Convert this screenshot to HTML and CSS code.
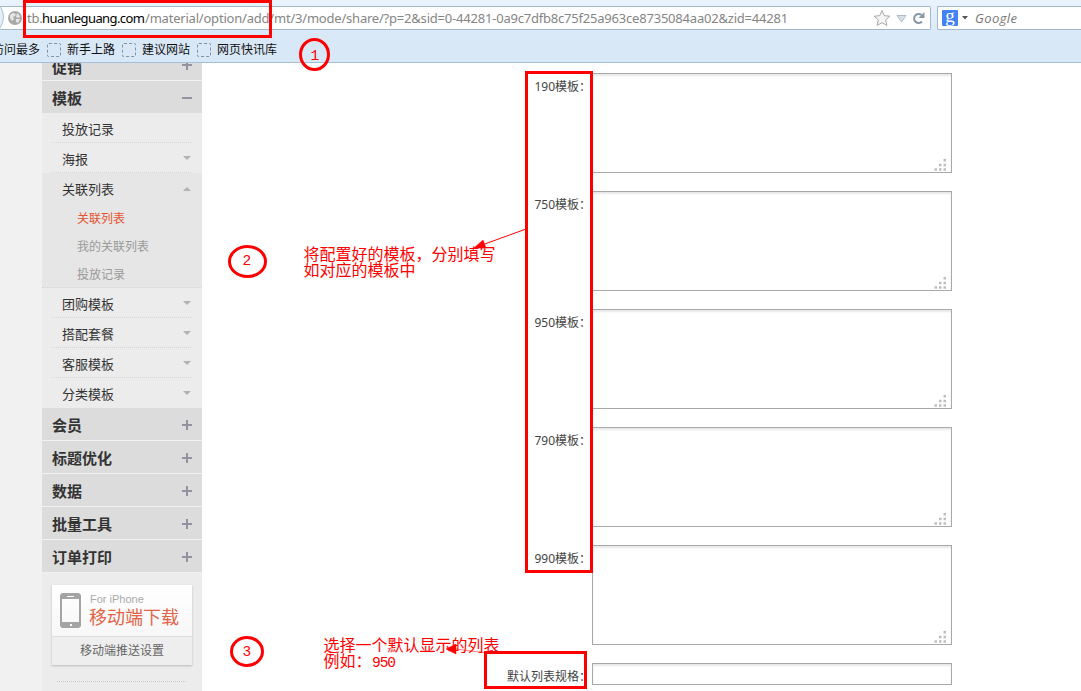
FILE: index.html
```html
<!DOCTYPE html>
<html lang="zh-CN">
<head>
<meta charset="utf-8">
<title>模板</title>
<link rel="stylesheet" href="styles.css">
</head>
<body>
<svg class="defs" width="0" height="0">
  <symbol id="plus" viewBox="0 0 10 10"><path d="M0 5h10M5 0v10" stroke="#9292a0" stroke-width="2"/></symbol>
  <symbol id="minus" viewBox="0 0 10 10"><path d="M0 5h10" stroke="#9292a0" stroke-width="2"/></symbol>
  <symbol id="down" viewBox="0 0 8 4"><path d="M0 0h8L4 4z" fill="#b2b2b2"/></symbol>
  <symbol id="up" viewBox="0 0 8 4"><path d="M0 4h8L4 0z" fill="#b2b2b2"/></symbol>
  <symbol id="grip" viewBox="0 0 12 12"><path d="M9.500 0h2.500v2.500h-2.500zM5 4.700h2.500v2.500h-2.500zM9.500 4.700h2.500v2.500h-2.500zM.5 9.300h2.500v2.500h-2.500zM5 9.300h2.500v2.500h-2.500zM9.500 9.300h2.500v2.500h-2.500z" fill="#bdbdbd"/></symbol>
</svg>
<header class="chrome">
  <div class="nav">
    <div class="address">
      <svg class="back" width="8" height="24" viewBox="0 0 8 24"><path d="M0 0Q7 11 0 22" fill="#e4effa" stroke="#a9c0d4"/></svg>
      <svg class="globe" width="14" height="14" viewBox="0 0 14 14"><circle cx="7" cy="7" r="7" fill="#a9a9a9"/><path d="M2 4l3-2 3 1-1 2-2 1 1 2-2 2-2-3zM9 2l3 3-1 2-3-1zM8 8l4 0-2 4-2-1z" fill="#e6e6e6"/></svg>
      <div class="url"><span class="u1">tb.</span><b class="u2">huanleguang.com</b><span class="u3">/material/option/add/mt/3/mode/share/?p=2&amp;sid=0-44281-0a9c7dfb8c75f25a963ce8735084aa02&amp;zid=44281</span></div>
      <svg class="tools" width="52" height="18" viewBox="0 0 52 18">
        <path d="M9 1.500l2.300 5.200 5.500.5-4.200 3.700 1.300 5.600L9 13.600l-4.900 2.900 1.300-5.600-4.200-3.700 5.500-.5z" fill="#f5f5f5" stroke="#aaa"/>
        <path d="M24 6.500h9L28.500 13z" fill="#d5e0ea" stroke="#b2bcc6"/>
        <path d="M49 12.500A4.500 4.500 0 1 1 48.500 6" fill="none" stroke="#8a98a6" stroke-width="2.200"/><path d="M51.500 3v6h-6z" fill="#8a98a6"/>
      </svg>
    </div>
    <div class="search">
      <span class="g">g</span>
      <svg width="6" height="4" viewBox="0 0 6 4"><path d="M0 0h6L3 3.500z" fill="#555"/></svg>
      <i class="engine">Google</i>
    </div>
  </div>
  <div class="bookmarks">
    <span class="most">访问最多</span>
    <span class="mark"><i class="ph"></i>新手上路</span>
    <span class="mark"><i class="ph"></i>建议网站</span>
    <span class="mark"><i class="ph"></i>网页快讯库</span>
  </div>
</header>
<main class="page">
  <nav class="side">
    <div class="head first"><span>促销</span><svg class="ic"><use href="#plus"/></svg></div>
    <div class="head open"><span>模板</span><svg class="ic"><use href="#minus"/></svg></div>
    <div class="item">投放记录</div>
    <div class="item">海报<svg class="ar"><use href="#down"/></svg></div>
    <div class="group">
      <div class="item">关联列表<svg class="ar"><use href="#up"/></svg></div>
      <div class="sub current">关联列表</div>
      <div class="sub">我的关联列表</div>
      <div class="sub">投放记录</div>
    </div>
    <div class="item">团购模板<svg class="ar"><use href="#down"/></svg></div>
    <div class="item">搭配套餐<svg class="ar"><use href="#down"/></svg></div>
    <div class="item">客服模板<svg class="ar"><use href="#down"/></svg></div>
    <div class="item last">分类模板<svg class="ar"><use href="#down"/></svg></div>
    <div class="head"><span>会员</span><svg class="ic"><use href="#plus"/></svg></div>
    <div class="head"><span>标题优化</span><svg class="ic"><use href="#plus"/></svg></div>
    <div class="head"><span>数据</span><svg class="ic"><use href="#plus"/></svg></div>
    <div class="head"><span>批量工具</span><svg class="ic"><use href="#plus"/></svg></div>
    <div class="head"><span>订单打印</span><svg class="ic"><use href="#plus"/></svg></div>
    <div class="app">
      <div class="dl">
        <svg width="21" height="35" viewBox="0 0 21 35"><path fill-rule="evenodd" d="M2 0h17l2 2v31l-2 2H2l-2-2V2zM2 6v23h17V6zM7 3v1h7V3zM10 31v2h2v-2z" fill="#a4a4a4"/></svg>
        <div class="dltext"><span class="for">For iPhone</span><span class="big">移动端下载</span></div>
      </div>
      <div class="push">移动端推送设置</div>
    </div>
    <div class="rule"></div>
  </nav>
  <section class="form">
    <div class="row"><label>190模板：</label><div class="area"><svg class="grip"><use href="#grip"/></svg></div></div>
    <div class="row"><label>750模板：</label><div class="area"><svg class="grip"><use href="#grip"/></svg></div></div>
    <div class="row"><label>950模板：</label><div class="area"><svg class="grip"><use href="#grip"/></svg></div></div>
    <div class="row"><label>790模板：</label><div class="area"><svg class="grip"><use href="#grip"/></svg></div></div>
    <div class="row"><label>990模板：</label><div class="area"><svg class="grip"><use href="#grip"/></svg></div></div>
    <div class="row"><label>默认列表规格：</label><div class="area input"></div></div>
  </section>
</main>
<svg class="notes" width="1081" height="691" viewBox="0 0 1081 691">
  <g fill="none" stroke="#f00" stroke-width="3">
    <path d="M24.500 1.500h246v35h-246z"/>
    <path d="M526.500 72.500h65v499h-65z"/>
    <path d="M485.500 652.500h100v35h-100z"/>
    <ellipse cx="314.500" cy="54.500" rx="14" ry="15"/>
    <ellipse cx="247.500" cy="261.500" rx="18" ry="15"/>
    <ellipse cx="247" cy="651.500" rx="15.500" ry="14"/>
  </g>
  <path d="M526 229L482 245" stroke="#f00"/>
  <path d="M474 248l9-8 3 8zM446 649l10-5v10zM456 649l30 4" fill="#f00" stroke="#f00" stroke-width=".5"/>
  <g class="num">
    <text x="310.500" y="60">1</text><text x="242.500" y="265">2</text><text x="242.500" y="656">3</text>
    <text x="372" y="667" textLength="24">950</text>
  </g>
  <g class="say">
    <text x="303.500" y="260" textLength="192">将配置好的模板，分别填写</text>
    <text x="303.500" y="276" textLength="112">如对应的模板中</text>
    <text x="323.500" y="651" textLength="176">选择一个默认显示的列表</text>
    <text x="323.500" y="667">例如：</text>
  </g>
</svg>
</body>
</html>
```
FILE: styles.css
```css
* { box-sizing: border-box; }
body { margin: 0; width: 1081px; height: 691px; overflow: hidden; display: flex; flex-direction: column; background: #fff; font-family: "Liberation Sans", "Noto Sans CJK SC", sans-serif; font-size: 12px; color: #333; position: relative; }
.defs { position: absolute; }
.chrome { height: 63px; flex: none; background: linear-gradient(#eaf3fd, #d9e8f7 55%); border-bottom: 1px solid #a5bdd6; overflow: hidden; }
.nav { display: flex; gap: 6px; padding-top: 6px; height: 36px; }
.address { width: 931px; height: 24px; display: flex; align-items: center; background: #fff; border: 1px solid #a3b8c9; border-left: 0; border-radius: 0 2px 2px 0; }
.back { flex: none; }
.globe { flex: none; }
.url { margin-left: 5px; width: 840px; flex: none; white-space: nowrap; font: 13px/22px "Noto Sans", sans-serif; color: #858585; display: flex; }
.u1 { width: 15px; letter-spacing: -.2px; }
.u2 { width: 103px; color: #000; font-weight: 400; letter-spacing: -.59px; }
.u3 { letter-spacing: -.206px; }
.tools { margin-left: 6px; flex: none; }
.search { flex: 1; height: 24px; display: flex; align-items: center; padding-left: 4px; background: #fff; border: 1px solid #a3b8c9; border-right: 0; border-radius: 2px 0 0 2px; }
.g { width: 16px; height: 16px; background: #4580f5; color: #fff; border-radius: 1px; font: 19px/11px "Liberation Serif", serif; text-align: center; margin-right: 4px; }
.engine { margin-left: 7px; font: italic 13px/22px "Open Sans", sans-serif; color: #777; letter-spacing: .4px; }
.bookmarks { display: flex; height: 26px; align-items: center; color: #111; line-height: 20px; padding-top: 1px; }
.most { margin-left: -8px; width: 48px; white-space: nowrap; }
.mark { display: flex; align-items: center; margin-left: 7px; white-space: nowrap; width: 68px; }
.ph { width: 14px; height: 14px; border: 1px dashed #85909b; border-radius: 2px; margin-right: 6px; flex: none; }
.page { flex: 1; display: flex; overflow: hidden; }
.side { flex: none; width: 202px; height: 628px; border-left: 42px solid #f1f1f1; background: #ececec; overflow: hidden; }
.head { height: 33px; background: #dcdcdc; border-bottom: 1px solid #f1f1f1; padding: 0 10px; display: flex; justify-content: space-between; align-items: center; font-size: 15px; font-weight: 700; line-height: 20px; }
.head span { padding-top: 4px; }
.first { height: 18px; align-items: flex-end; }
.first span { height: 26px; }
.first .ic { margin-bottom: 10px; }
.open { height: 32px; border: 0; }
.ic { width: 10px; height: 10px; margin-top: 2px; }
.item { height: 30px; margin: 0 11px 0 10px; padding-left: 10px; border-bottom: 1px dotted #d5d5d5; display: flex; justify-content: space-between; align-items: center; font-size: 13px; padding-top: 1px; }
.ar { width: 8px; height: 4px; margin-right: 0; }
.group { background: #e6e6e6; height: 115px; border-bottom: 1px dotted #d5d5d5; }
.group .item { border: 0; }
.group .sub { height: 28px; line-height: 32px; padding-left: 35px; color: #999; font-size: 12px; }
.group .current { color: #e55230; }
.last { border: 0; padding-top: 0; }
.app { margin: 12px 10px 0; box-shadow: 0 1px 2px #bbb; height: 80px; }
.dl { height: 51px; background: linear-gradient(#fff, #f7f7f7); display: flex; align-items: center; padding-left: 8px; gap: 8px; }
.dltext { display: flex; flex-direction: column; white-space: nowrap; }
.for { font-size: 11px; line-height: 14px; color: #aaa; padding-left: 1px; }
.big { font-size: 18px; line-height: 24px; color: #e26448; }
.push { height: 29px; line-height: 28px; text-align: center; border-top: 1px solid #ddd; color: #666; background: #eee; }
.rule { margin: 16px 16px 0 15px; border-top: 1px dotted #c8c8c8; }
.form { flex: 1; padding-top: 10px; display: flex; flex-direction: column; gap: 18px; }
.row { display: flex; }
.row label { width: 390px; padding-right: 1px; text-align: right; font: 12px/28px "Noto Sans", "Noto Sans CJK SC", sans-serif; height: 22px; color: #444; white-space: nowrap; }
.area { width: 360px; height: 100px; border: 1px solid #a9a9a9; box-shadow: inset 0 2px 2px #e8e8e8; display: flex; justify-content: flex-end; align-items: flex-end; padding: 0 5px 1px 0; background: #fff; }
.grip { width: 12px; height: 12px; }
.input { height: 22px; }
.notes { position: absolute; left: 0; top: 0; }
.num { font: 14.500px "Liberation Mono", monospace; fill: #f00; }
.say { font: 16px "Noto Sans CJK SC", sans-serif; fill: #f00; }
```
